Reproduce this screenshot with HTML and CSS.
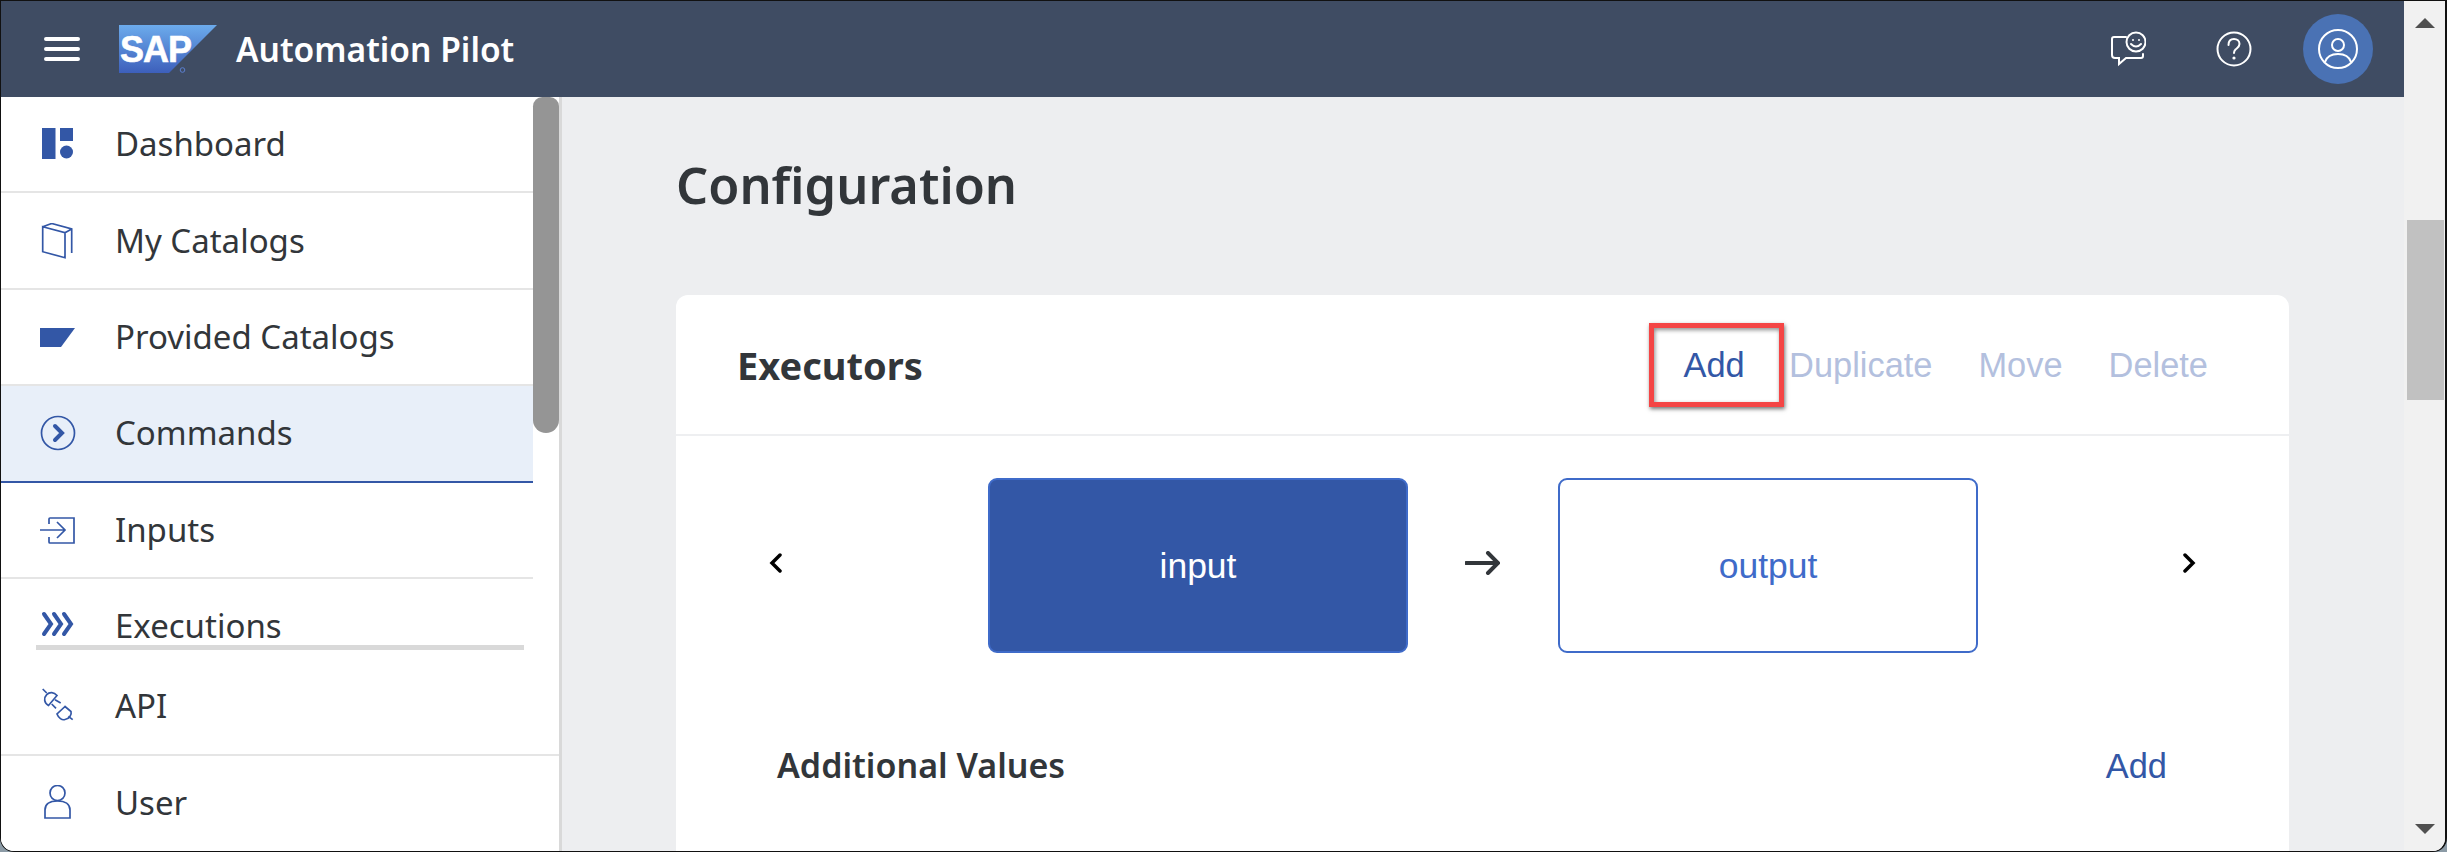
FILE: index.html
```html
<!DOCTYPE html>
<html lang="en">
<head>
<meta charset="utf-8">
<title>Automation Pilot</title>
<link rel="stylesheet" href="styles.css">
</head>
<body>
<div class="app">
  <div class="content">
    <header class="topbar">
      <svg class="burger" viewBox="0 0 36 26"><path d="M2 3H34M2 13H34M2 23H34"/></svg>
      <svg class="logo" viewBox="0 0 98 48">
        <defs><linearGradient id="sapg" x1="0" y1="0" x2="0" y2="1"><stop offset="0" stop-color="#6cabec"/><stop offset="1" stop-color="#3d5fbb"/></linearGradient></defs>
        <polygon points="0,0 98,0 50,48 0,48" fill="url(#sapg)"/>
        <text class="logo-text" x="1" y="37">SAP</text>
        <circle class="logo-reg" cx="63.500" cy="45" r="2.300"/>
      </svg>
      <span class="app-title">Automation Pilot</span>
      <span class="topbar-space"></span>
      <svg class="top-icon chat" viewBox="0 0 36 36"><path d="M16 6H4Q2 6 2 8V24Q2 27 5 27H9V33L16 27H31Q33 27 33 25V23"/><circle cx="26" cy="11" r="9.5"/><path d="M21 13Q26 18 31 13"/><circle class="dot" cx="23" cy="9" r="1"/><circle class="dot" cx="29" cy="9" r="1"/></svg>
      <svg class="top-icon help" viewBox="0 0 36 36"><circle cx="18" cy="18" r="16.5"/><path d="M12.500 14C12.500 10 15 8 18 8C21 8 23.500 10 23.500 13C23.500 16 21 17 19.500 18.500C18.500 19.500 18 20 18 22"/><circle class="dot" cx="18" cy="27" r="1.600"/></svg>
      <div class="avatar"><svg viewBox="0 0 40 40"><circle cx="20" cy="20" r="19"/><circle cx="20" cy="16" r="6"/><path d="M7 33C9 27 14 25 20 25C26 25 31 27 33 33"/></svg></div>
    </header>
    <div class="body">
      <aside class="sidebar">
        <div class="side-upper">
          <nav class="side-list">
            <a class="row"><svg class="nav-icon solid" viewBox="0 0 36 36"><rect x="2" y="2" width="13.500" height="31"/><rect x="20" y="2" width="13" height="13"/><circle cx="26.500" cy="26" r="6.500"/></svg><span>Dashboard</span></a>
            <a class="row"><svg class="nav-icon" viewBox="0 0 36 36"><path d="M2.700 3.700L25 9.700V34.700L2.700 28.700ZM2.700 3.700L11.700 .5L31.700 6V30M25 9.700L31.700 6"/></svg><span>My Catalogs</span></a>
            <a class="row"><svg class="nav-icon solid" viewBox="0 0 36 36"><polygon points="0,9 35,9 21,28 0,28"/></svg><span>Provided Catalogs</span></a>
            <a class="row selected"><svg class="nav-icon" viewBox="0 0 36 36"><circle cx="18" cy="18" r="16.500"/><path class="thick" d="M15 11L22 18L15 25"/></svg><span>Commands</span></a>
            <a class="row"><svg class="nav-icon" viewBox="0 0 36 36"><path d="M9 12V7Q9 6 10 6H34V31H10Q9 31 9 30V25M0 18H25M17 10L25 18L17 26"/></svg><span>Inputs</span></a>
            <a class="row"><svg class="nav-icon" viewBox="0 0 36 36"><path class="thick" d="M4 6L11 16L4 26M14 6L21 16L14 26M24 6L31 16L24 26"/></svg><span>Executions</span></a>
          </nav>
          <div class="side-track"><div class="side-thumb"></div></div>
        </div>
        <div class="hscroll"></div>
        <a class="row api"><svg class="nav-icon" viewBox="0 0 36 36"><path d="M2.700 1L6.700 5M17 7.500L8.500 17.500C4 15 3.500 10 6.700 6.700C9.500 3.800 14 4 17 7.500ZM15 11.700L20.700 15M11.700 16L16 20.300"/><path d="M25 18.500L17 26C18.500 30 22 32.500 25 31.500C29 31 32 27 31 23.500ZM28.300 28.300L32.700 31.700"/></svg><span>API</span></a>
        <a class="row user"><svg class="nav-icon" viewBox="0 0 36 36"><circle cx="17.500" cy="8" r="7.500"/><path d="M5 33V25C5 19 10 16 17.500 16C25 16 30 19 30 25V33Z"/></svg><span>User</span></a>
      </aside>
      <main class="main">
        <h1 class="page-title">Configuration</h1>
        <section class="card">
          <div class="card-head">
            <h2 class="card-title">Executors</h2>
            <div class="actions">
              <button class="action add-marked">Add</button>
              <button class="action off">Duplicate</button>
              <button class="action off">Move</button>
              <button class="action off">Delete</button>
            </div>
          </div>
          <div class="carousel">
            <svg class="chev" viewBox="0 0 14 20"><path d="M11 2L3 10L11 18"/></svg>
            <div class="step active">input</div>
            <svg class="step-arrow" viewBox="0 0 35 24"><path d="M1 12H33M23 2L33 12L23 22"/></svg>
            <div class="step">output</div>
            <svg class="chev next" viewBox="0 0 14 20"><path d="M3 2L11 10L3 18"/></svg>
          </div>
          <div class="values">
            <h3 class="values-title">Additional Values</h3>
            <button class="action link">Add</button>
          </div>
        </section>
      </main>
    </div>
  </div>
  <div class="vscroll">
    <div class="arrow-up"></div>
    <div class="vthumb"></div>
    <div class="vspace"></div>
    <div class="arrow-down"></div>
  </div>
</div>
</body>
</html>
```
FILE: styles.css
```css
* { box-sizing: border-box; }
html, body { margin: 0; height: 100%; }
body { background: #8c9ba6; overflow: hidden; font-family: "Noto Sans", "Liberation Sans", sans-serif; color: #32363a; }
.app { width: 2447px; height: 852px; display: flex; border: 1px solid #111; border-right-width: 2px; border-radius: 0 0 14px 14px; overflow: hidden; background: #f1f1f1; }
.content { width: 2403px; display: flex; flex-direction: column; }

.topbar { height: 96px; flex: none; background: #3f4c63; display: flex; align-items: center; padding: 0 31px 0 43px; }
.burger { width: 36px; height: 26px; fill: none; stroke: #fff; stroke-width: 4; stroke-linecap: round; margin-right: 39px; }
.logo { width: 98px; height: 48px; margin-right: 19px; }
.logo-text { font: bold 36px "Liberation Sans", sans-serif; fill: #fff; stroke: #fff; stroke-width: .6; letter-spacing: -1px; }
.logo-reg { fill: none; stroke: #5b7fd0; stroke-width: 1; }
.app-title { font-size: 33.6px; font-weight: 600; color: #fff; }
.topbar-space { flex: 1; }
.top-icon { width: 36px; height: 36px; fill: none; stroke: #fff; stroke-width: 2; stroke-linecap: round; }
.top-icon .dot { fill: #fff; stroke: none; }
.chat { margin-right: 70px; }
.help { margin-right: 51px; }
.avatar { width: 70px; height: 70px; border-radius: 50%; background: #4a72b4; display: flex; align-items: center; justify-content: center; }
.avatar svg { width: 40px; height: 40px; fill: none; stroke: #fff; stroke-width: 2; }

.body { flex: 1; display: flex; min-height: 0; }
.sidebar { width: 561px; flex: none; background: #fff; border-right: 3px solid #d9d9d9; display: flex; flex-direction: column; }
.side-upper { height: 548px; flex: none; display: flex; overflow: hidden; }
.side-list { flex: 1; min-width: 0; }
.side-track { width: 26px; flex: none; }
.side-thumb { height: 336px; background: #959595; border-radius: 10px 10px 14px 14px; }
.row { display: flex; align-items: center; height: 96.4px; padding-left: 39px; border-bottom: 2px solid #e5e5e5; font-size: 33px; line-height: 36px; color: #32363a; }
.row span { margin-left: 39px; }
.row.selected { background: #e8eff9; border-bottom-color: #3357a6; }
.row.api { height: 106px; padding-top: 8px; }
.row.user { flex: 1; height: auto; border-bottom: 0; padding-bottom: 2px; }
.nav-icon { width: 36px; height: 36px; flex: none; fill: none; stroke: #3357a6; stroke-width: 1.7; }
.nav-icon.solid { fill: #3357a6; stroke: none; }
.nav-icon .thick { stroke-width: 4; stroke-linecap: round; }
.hscroll { height: 5px; flex: none; margin: 0 35px; background: #d9d9d9; }

.main { flex: 1; min-width: 0; background: #edeef0; padding: 0 116px 0 114px; overflow: hidden; }
.page-title { margin: 0; height: 198px; padding-top: 51px; font-size: 50.5px; line-height: 74px; font-weight: 600; color: #32363a; }
.card { width: 1613px; height: 620px; background: #fff; border-radius: 12px 12px 0 0; }
.card-head { height: 141px; display: flex; align-items: center; justify-content: space-between; padding: 0 81px 0 61px; border-bottom: 2px solid #eeeff1; }
.card-title { margin: 0; font-size: 38px; line-height: 46px; font-weight: 700; color: #32363a; }
.actions { display: flex; align-items: center; gap: 46px; }
.action { border: 0; background: none; padding: 0; font: 34.4px/44px "Liberation Sans", sans-serif; color: #3357a6; }
.action.off { color: #b3c0de; }
.action.link { margin-top: 2px; }
.add-marked { width: 135px; height: 84px; margin-right: -41px; padding: 0 5px 0 0; border: 5px solid #f44545; box-shadow: 1px 2px 4px rgba(0, 0, 0, .55), inset 1px 2px 4px rgba(0, 0, 0, .45); }
.carousel { display: flex; align-items: center; padding: 42px 0 0 93px; }
.chev { width: 14px; height: 20px; fill: none; stroke: #000; stroke-width: 3.5; stroke-linecap: round; margin-right: 205px; margin-top: -6px; }
.chev.next { margin: -6px 0 0 204px; }
.step { width: 420px; height: 175px; display: flex; align-items: center; justify-content: center; border: 2px solid #3f6bc9; border-radius: 9px; font: 35.5px/44px "Liberation Sans", sans-serif; color: #3f6bc9; }
.step.active { background: #3357a6; color: #fff; }
.step-arrow { width: 35px; height: 24px; margin: -6px 58px 0 57px; fill: none; stroke: #32363a; stroke-width: 4; stroke-linecap: round; }
.values { display: flex; align-items: center; justify-content: space-between; margin-top: 89px; padding: 0 122px 0 101px; }
.values-title { margin: 0; font-size: 34px; line-height: 44px; font-weight: 600; color: #32363a; }

.vscroll { width: 42px; flex: none; background: #f1f1f1; display: flex; flex-direction: column; align-items: center; padding: 17px 0 17px; }
.arrow-up { width: 0; height: 0; border-left: 10px solid transparent; border-right: 10px solid transparent; border-bottom: 10px solid #505050; }
.vthumb { width: 37px; height: 180px; margin-top: 192px; background: #c1c1c1; }
.vspace { flex: 1; }
.arrow-down { width: 0; height: 0; border-left: 10px solid transparent; border-right: 10px solid transparent; border-top: 10px solid #505050; }
```
